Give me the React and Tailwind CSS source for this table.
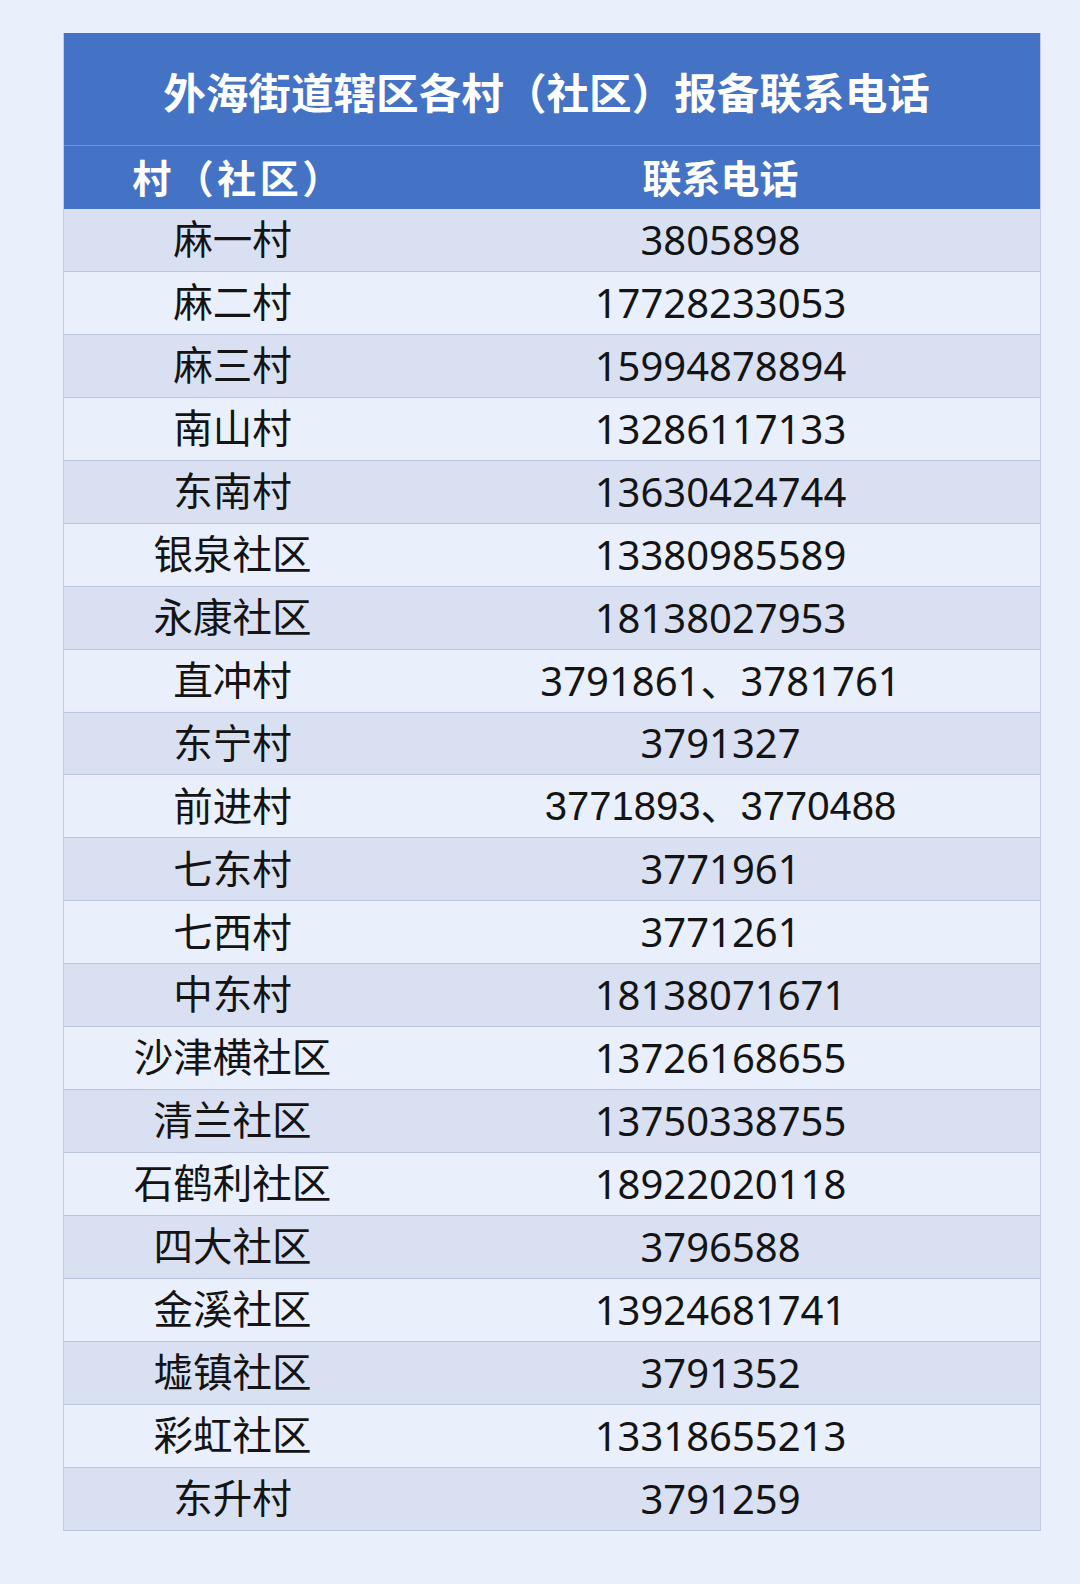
import React from 'react';

const rows = [
  { name: '麻一村', phone: '3805898' },
  { name: '麻二村', phone: '17728233053' },
  { name: '麻三村', phone: '15994878894' },
  { name: '南山村', phone: '13286117133' },
  { name: '东南村', phone: '13630424744' },
  { name: '银泉社区', phone: '13380985589' },
  { name: '永康社区', phone: '18138027953' },
  { name: '直冲村', phone: '3791861、3781761' },
  { name: '东宁村', phone: '3791327' },
  { name: '前进村', phone: '3771893、3770488', arial: true },
  { name: '七东村', phone: '3771961' },
  { name: '七西村', phone: '3771261' },
  { name: '中东村', phone: '18138071671' },
  { name: '沙津横社区', phone: '13726168655' },
  { name: '清兰社区', phone: '13750338755' },
  { name: '石鹤利社区', phone: '18922020118' },
  { name: '四大社区', phone: '3796588' },
  { name: '金溪社区', phone: '13924681741' },
  { name: '墟镇社区', phone: '3791352' },
  { name: '彩虹社区', phone: '13318655213' },
  { name: '东升村', phone: '3791259' },
];

const App = () => {
  return (
    <div className="w-[1080px] h-[1584px] bg-[#e9f0fc] pt-[33px] pl-[63px] font-['Noto_Sans','Noto_Sans_CJK_SC',sans-serif]">
      <div className="w-[978px] border-l border-r border-[#c3cbe0]">
        {/* title */}
        <div className="h-[113px] bg-[#4472c4] border-b border-[#7096da] flex items-center justify-center pr-[11px]">
          <h1 className="text-[42.6px] font-bold text-white leading-none pt-[6px]">
            外海街道辖区各村（社区）报备联系电话
          </h1>
        </div>

        {/* header */}
        <div className="h-[63px] bg-[#4472c4] flex items-center text-white font-bold text-[39px] leading-none">
          <div className="w-[337px] text-center pl-[12px] tracking-[3.5px]">村（社区）</div>
          <div className="flex-1 text-center">联系电话</div>
        </div>

        {/* rows */}
        {rows.map((row, i) => (
          <div
            key={i}
            className={`h-[62.95px] flex items-center border-b border-[#b9c4df] leading-none text-[#141414] ${
              i % 2 === 0 ? 'bg-[#d9e0f2]' : 'bg-[#e9effb]'
            }`}
          >
            <div className="w-[337px] text-center text-[39.5px]">{row.name}</div>
            <div
              className={`flex-1 text-center text-[40px] ${
                row.arial ? "font-['Liberation_Sans','Noto_Sans_CJK_SC',sans-serif]" : ''
              }`}
            >
              {row.phone}
            </div>
          </div>
        ))}
      </div>
    </div>
  );
};

export default App;
